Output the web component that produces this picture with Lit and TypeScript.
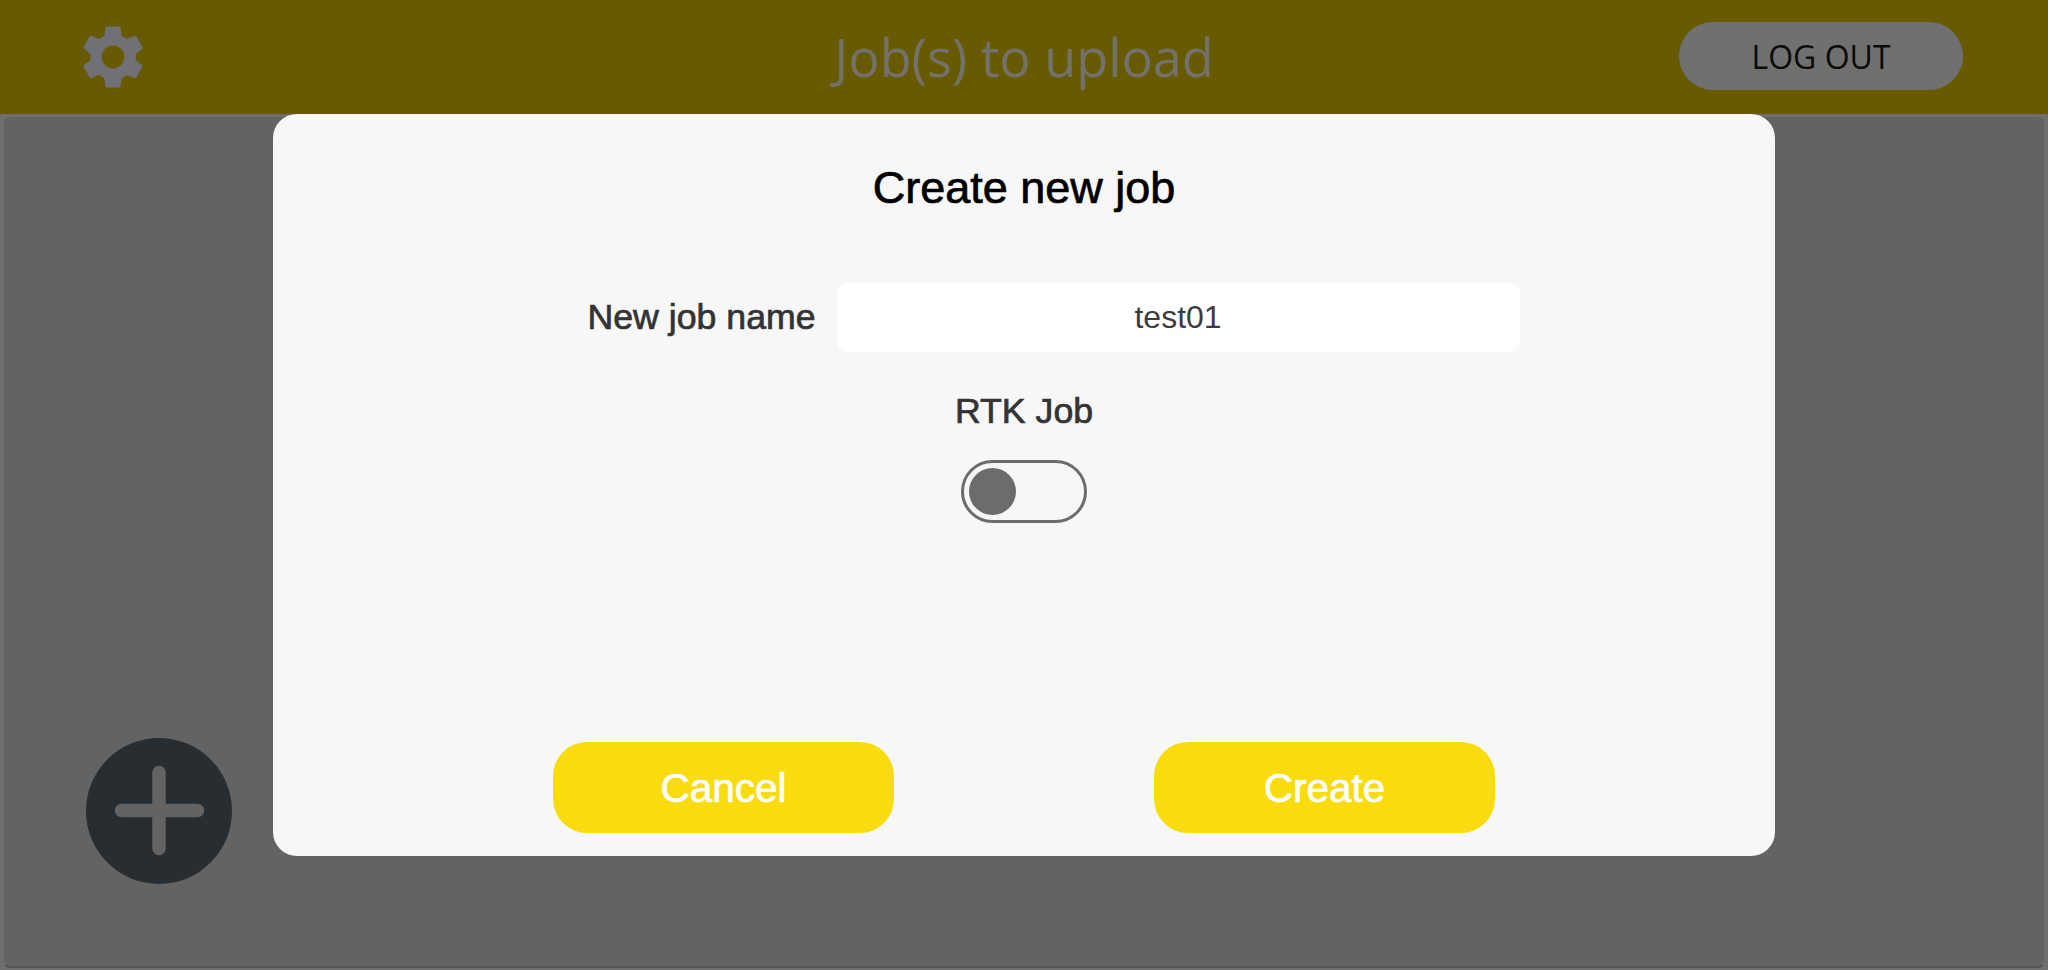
import { LitElement, html, css } from "lit";
import { customElement } from "lit/decorators.js";

@customElement("app-root")
export class AppRoot extends LitElement {
  static styles = css`
    :host {
      display: block;
      position: relative;
      width: 2048px;
      height: 970px;
      overflow: hidden;
      background: #6e6e6e;
      font-family: "Liberation Sans", Arial, sans-serif;
    }
    .page {
      display: flex;
      flex-direction: column;
      height: 100%;
    }
    .header {
      flex: none;
      height: 114px;
      box-sizing: border-box;
      background: #685a00;
      display: grid;
      grid-template-columns: 1fr auto 1fr;
      align-items: center;
      padding: 0 85px;
    }
    .gear {
      width: 76px;
      height: 76px;
      margin-left: -10px;
      fill: #6f7177;
      display: block;
    }
    .title {
      font-family: "Open Sans", sans-serif;
      font-size: 52.2px;
      line-height: 60px;
      color: #74716a;
    }
    .logout {
      justify-self: end;
      width: 284px;
      height: 68px;
      margin: 0 0 2px;
      border: none;
      border-radius: 34px;
      background: #707070;
      font-family: "Open Sans", sans-serif;
      font-size: 32px;
      color: #0b0b0b;
      padding: 0;
    }
    .content {
      flex: 1;
      box-sizing: border-box;
      margin: 1px 2px 2px;
      border: 2px solid #6f6f6f;
      border-bottom-color: #555;
      border-radius: 8px;
      background: #636363;
      display: flex;
      flex-direction: column;
      justify-content: flex-end;
      padding: 0 0 82px 82px;
    }
    .fab {
      width: 146px;
      height: 146px;
      border: none;
      padding: 0;
      border-radius: 50%;
      background: #282d31;
      display: block;
    }
    .fab svg {
      width: 146px;
      height: 146px;
      display: block;
    }
    .scrim {
      position: absolute;
      inset: 0;
      display: flex;
      flex-direction: column;
      align-items: center;
      padding-top: 114px;
      box-sizing: border-box;
    }
    .modal {
      width: 1502px;
      height: 742px;
      box-sizing: border-box;
      border-radius: 24px;
      background: #f7f7f7;
      display: flex;
      flex-direction: column;
      align-items: center;
      padding-top: 48px;
    }
    .modal h2 {
      margin: 0;
      font-size: 45px;
      line-height: 52px;
      font-weight: 400;
      color: #000;
      -webkit-text-stroke: 0.7px #000;
    }
    .name-row {
      margin-top: 69px;
      display: flex;
      align-items: center;
      gap: 21px;
      margin-left: 59px;
    }
    .label {
      font-size: 35.7px;
      color: #333;
      -webkit-text-stroke: 0.7px #333;
    }
    .input {
      width: 683px;
      height: 69px;
      box-sizing: border-box;
      border: none;
      border-radius: 10px;
      background: #fff;
      text-align: center;
      font-family: inherit;
      font-size: 32px;
      color: #3c3c3c;
      padding: 0;
      outline: none;
    }
    .rtk {
      margin-top: 38px;
      line-height: 42px;
    }
    .toggle {
      margin-top: 28px;
      width: 126px;
      height: 63px;
      box-sizing: border-box;
      border: 3.5px solid #6c6c6c;
      border-radius: 32px;
      display: flex;
      align-items: center;
      padding-left: 5px;
    }
    .knob {
      width: 47px;
      height: 47px;
      border-radius: 50%;
      background: #6c6c6c;
    }
    .actions {
      margin-top: auto;
      padding-bottom: 23px;
      display: flex;
      gap: 260px;
    }
    .btn {
      width: 341px;
      height: 91px;
      border: none;
      padding: 2px 0 0;
      border-radius: 34px;
      background: #f9dc10;
      color: #fff;
      font-family: inherit;
      font-size: 40.5px;
      -webkit-text-stroke: 0.7px #fff;
    }
  `;

  render() {
    return html`
      <div class="page">
        <header class="header">
          <svg class="gear" viewBox="0 0 24 24">
            <path d="M19.14 12.94c.04-.3.06-.61.06-.94 0-.32-.02-.64-.07-.94l2.03-1.58a.49.49 0 0 0 .12-.61l-1.92-3.32a.488.488 0 0 0-.59-.22l-2.39.96c-.5-.38-1.03-.7-1.62-.94l-.36-2.54a.484.484 0 0 0-.48-.41h-3.84c-.24 0-.43.17-.47.41l-.36 2.54c-.59.24-1.13.57-1.62.94l-2.39-.96c-.22-.08-.47 0-.59.22L2.74 8.87c-.12.21-.08.47.12.61l2.03 1.58c-.05.3-.09.63-.09.94s.02.64.07.94l-2.03 1.58a.49.49 0 0 0-.12.61l1.92 3.32c.12.22.37.29.59.22l2.39-.96c.5.38 1.03.7 1.62.94l.36 2.54c.05.24.24.41.48.41h3.84c.24 0 .44-.17.47-.41l.36-2.54c.59-.24 1.13-.56 1.62-.94l2.39.96c.22.08.47 0 .59-.22l1.92-3.32c.12-.22.07-.47-.12-.61l-2.01-1.58zM12 15.6c-1.98 0-3.6-1.62-3.6-3.6s1.62-3.6 3.6-3.6 3.6 1.62 3.6 3.6-1.62 3.6-3.6 3.6z"/>
          </svg>
          <div class="title">Job(s) to upload</div>
          <button class="logout">LOG OUT</button>
        </header>
        <main class="content">
          <button class="fab">
            <svg viewBox="0 0 146 146">
              <path d="M73 34.5V110.5M35.5 72.5H111.5" stroke="#636363" stroke-width="13.5" stroke-linecap="round" fill="none"/>
            </svg>
          </button>
        </main>
      </div>
      <div class="scrim">
        <section class="modal">
          <h2>Create new job</h2>
          <div class="name-row">
            <span class="label">New job name</span>
            <input class="input" .value=${"test01"} />
          </div>
          <div class="label rtk">RTK Job</div>
          <div class="toggle"><div class="knob"></div></div>
          <div class="actions">
            <button class="btn">Cancel</button>
            <button class="btn">Create</button>
          </div>
        </section>
      </div>
    `;
  }
}
